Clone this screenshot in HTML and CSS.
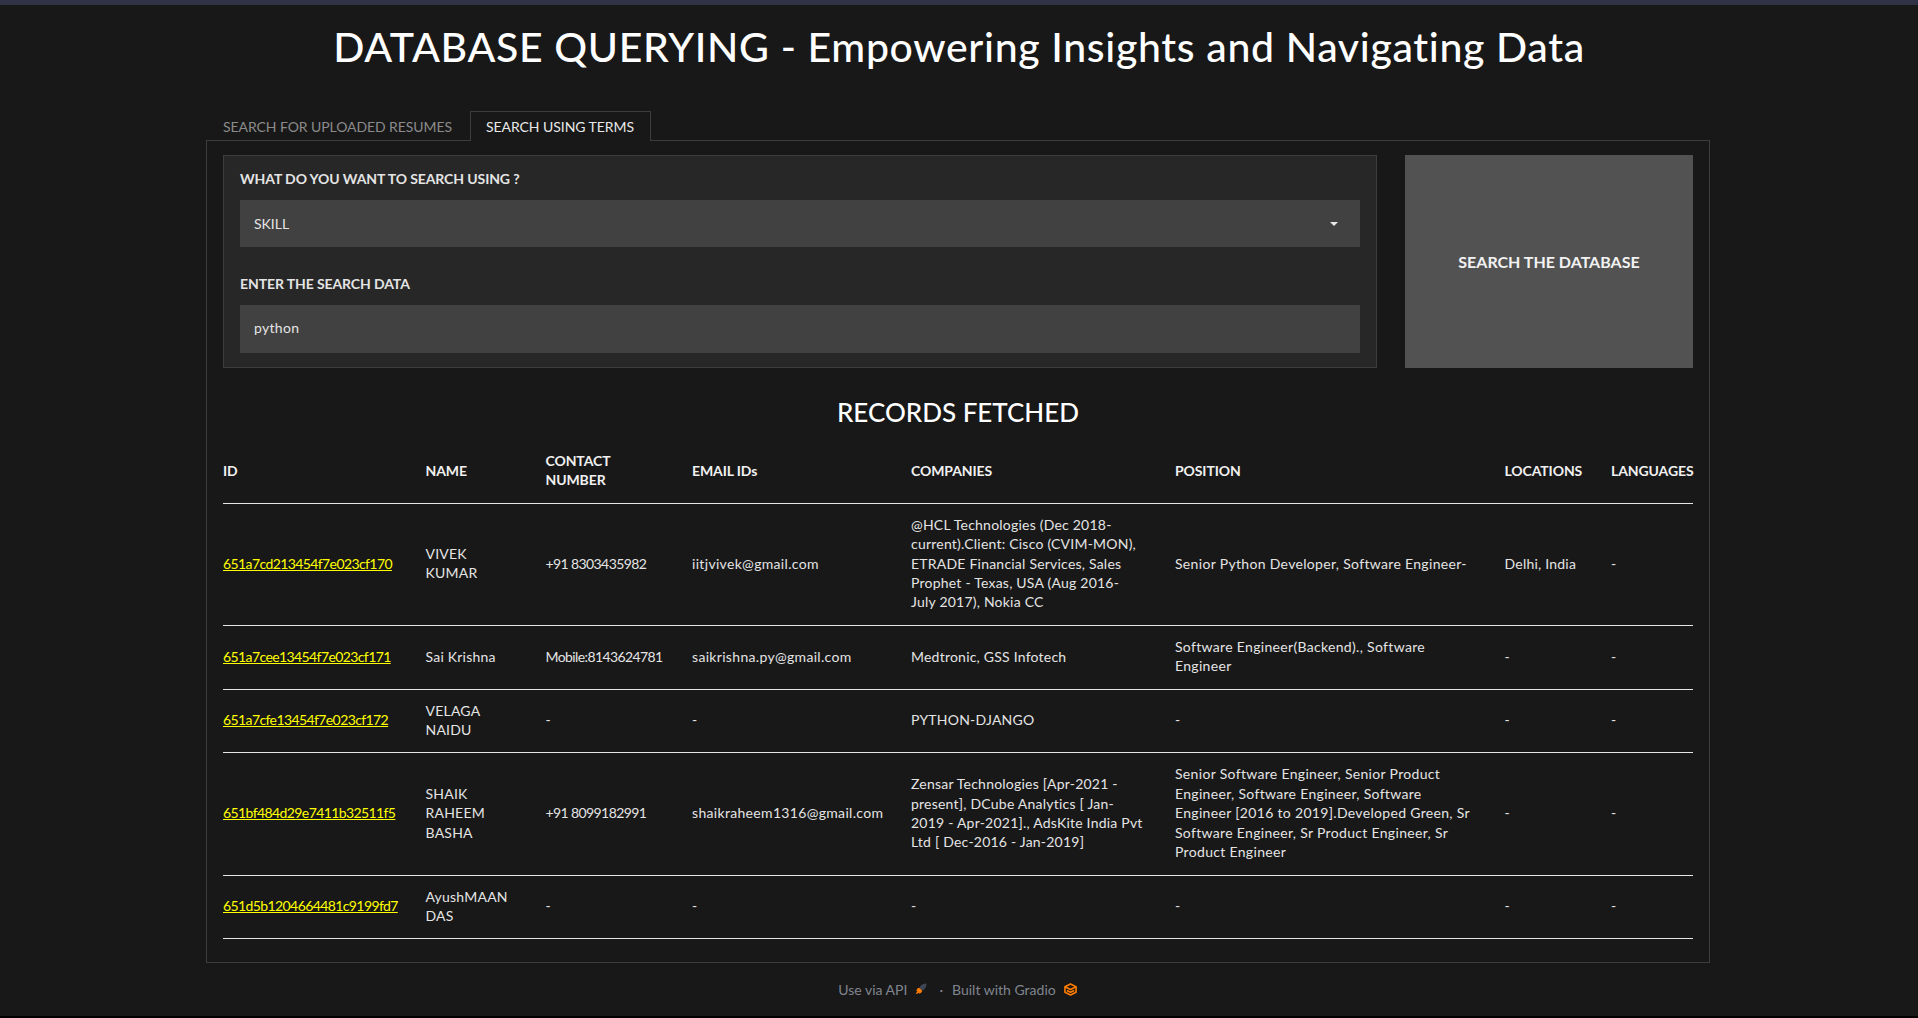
FILE: index.html
```html
<!DOCTYPE html>
<html lang="en">
<head>
  <meta charset="UTF-8">
  <title>Database Querying</title>
  <link rel="stylesheet" href="styles.css">
</head>
<body>

<div class="topbar"></div>

<h1>DATABASE QUERYING - Empowering Insights and Navigating Data</h1>

<div class="tabs">
  <div class="tab">SEARCH FOR UPLOADED RESUMES</div>
  <div class="tab active">SEARCH USING TERMS</div>
</div>

<div class="container">
  <div class="search-row">
    <div class="panel">
      <label class="field-label">WHAT DO YOU WANT TO SEARCH USING ?</label>
      <div class="input select">
        <span>SKILL</span>
        <span class="caret"></span>
      </div>
      <label class="field-label second">ENTER THE SEARCH DATA</label>
      <div class="input tall">python</div>
    </div>
    <div class="btn">SEARCH THE DATABASE</div>
  </div>

  <h2>RECORDS FETCHED</h2>

  <table class="records">
    <thead>
      <tr>
        <th>ID</th>
        <th>NAME</th>
        <th>CONTACT<br>NUMBER</th>
        <th>EMAIL IDs</th>
        <th>COMPANIES</th>
        <th>POSITION</th>
        <th>LOCATIONS</th>
        <th>LANGUAGES</th>
      </tr>
    </thead>
    <tbody>
      <tr>
        <td><a href="#">651a7cd213454f7e023cf170</a></td>
        <td>VIVEK<br>KUMAR</td>
        <td class="phone">+91 8303435982</td>
        <td class="email">iitjvivek@gmail.com</td>
        <td>@HCL Technologies (Dec 2018-<br>current).Client: Cisco (CVIM-MON),<br>ETRADE Financial Services, Sales<br>Prophet - Texas, USA (Aug 2016-<br>July 2017), Nokia CC</td>
        <td class="position">Senior Python Developer, Software Engineer-</td>
        <td>Delhi, India</td>
        <td>-</td>
      </tr>
      <tr>
        <td><a href="#">651a7cee13454f7e023cf171</a></td>
        <td>Sai Krishna</td>
        <td class="phone">Mobile:8143624781</td>
        <td class="email">saikrishna.py@gmail.com</td>
        <td>Medtronic, GSS Infotech</td>
        <td class="position">Software Engineer(Backend)., Software<br>Engineer</td>
        <td>-</td>
        <td>-</td>
      </tr>
      <tr>
        <td><a href="#">651a7cfe13454f7e023cf172</a></td>
        <td>VELAGA<br>NAIDU</td>
        <td>-</td>
        <td>-</td>
        <td>PYTHON-DJANGO</td>
        <td>-</td>
        <td>-</td>
        <td>-</td>
      </tr>
      <tr>
        <td><a href="#">651bf484d29e7411b32511f5</a></td>
        <td>SHAIK<br>RAHEEM<br>BASHA</td>
        <td class="phone">+91 8099182991</td>
        <td class="email">shaikraheem1316@gmail.com</td>
        <td>Zensar Technologies [Apr-2021 -<br>present], DCube Analytics [ Jan-<br>2019 - Apr-2021]., AdsKite India Pvt<br>Ltd [ Dec-2016 - Jan-2019]</td>
        <td class="position">Senior Software Engineer, Senior Product<br>Engineer, Software Engineer, Software<br>Engineer [2016 to 2019].Developed Green, Sr<br>Software Engineer, Sr Product Engineer, Sr<br>Product Engineer</td>
        <td>-</td>
        <td>-</td>
      </tr>
      <tr>
        <td><a href="#">651d5b1204664481c9199fd7</a></td>
        <td>AyushMAAN<br>DAS</td>
        <td>-</td>
        <td>-</td>
        <td>-</td>
        <td>-</td>
        <td>-</td>
        <td>-</td>
      </tr>
    </tbody>
  </table>
</div>

<div class="footer">
  <span>Use via API</span>
  <svg class="rocket" viewBox="0 0 12 12" width="12" height="12">
    <path d="M11.5 .5 C8.5 .5 6.5 1.6 5 3.4 L4.6 5.2 L6.8 7.4 L8.6 7 C10.4 5.5 11.5 3.5 11.5 .5 Z" fill="#3f4654"/>
    <path d="M4.2 4.8 C2.6 5 1.8 6.4 1.2 8 L2.6 7.8 C1.6 9.2 1.2 10.2 1 11 C1.8 10.8 2.8 10.4 4.2 9.4 L4 10.8 C5.6 10.2 7 9.4 7.2 7.8 Z" fill="#ff7c00"/>
  </svg>
  <span class="dot">·</span>
  <span>Built with Gradio</span>
  <svg class="logo" viewBox="0 0 14 14" width="13" height="13">
    <path d="M7 1 L13 4 V10 L7 13 L1 10 V4 Z M1 4 L7 7 L13 4 M3 8 L7 10 L11 8" fill="none" stroke="#ff7c00" stroke-width="1.7" stroke-linejoin="round"/>
  </svg>
</div>

</body>
</html>
```

FILE: styles.css
```css
* {
  box-sizing: border-box;
  margin: 0;
  padding: 0;
}
body {
  font-family: Lato, "Noto Sans", sans-serif;
  font-size: 14px;
  background: #181818;
  color: #e4e4e4;
  height: 1018px;
  overflow: hidden;
  border-bottom: 2px solid #000;
}
.topbar {
  height: 5px;
  background: #2f3345;
}
h1 {
  height: 106px;
  padding-top: 18px;
  font-size: 41px;
  line-height: 48px;
  font-weight: 500;
  color: #fff;
  text-align: center;
  letter-spacing: 0.65px;
}
.tabs {
  display: flex;
  margin: 0 206px;
  height: 30px;
  position: relative;
  z-index: 1;
}
.tab {
  padding: 0 17px 0 16px;
  line-height: 30px;
  color: #8b8b8b;
  border: 1px solid transparent;
  border-bottom: none;
  letter-spacing: -0.08px;
}
.tab.active {
  color: #e8e8e8;
  background: #181818;
  border-color: #3d3d3d;
  padding: 0 16px 0 15px;
  letter-spacing: -0.05px;
}
.container {
  width: 1504px;
  height: 823px;
  margin: -1px 0 0 206px;
  padding: 14px 16px 0;
  border: 1px solid #3d3d3d;
}
.search-row {
  display: grid;
  grid-template-columns: 1fr 288px;
  gap: 28px;
  height: 213px;
}
.panel {
  background: #272727;
  border: 1px solid #3d3d3d;
  padding: 16px 16px 14px;
}
.field-label {
  display: block;
  height: 14px;
  line-height: 14px;
  font-weight: 700;
  color: #e4e4e4;
  margin-bottom: 14px;
  letter-spacing: -0.1px;
}
.field-label.second {
  margin-top: 30px;
}
.input {
  height: 47px;
  padding: 0 14px;
  background: #414141;
  color: #e4e4e4;
  line-height: 45px;
}
.input.tall {
  height: 48px;
  line-height: 46px;
  letter-spacing: 0.3px;
}
.select {
  display: flex;
  justify-content: space-between;
  align-items: center;
}
.caret {
  width: 0;
  height: 0;
  margin-right: 8px;
  border-left: 4px solid transparent;
  border-right: 4px solid transparent;
  border-top: 4px solid #e8e8e8;
}
.btn {
  display: flex;
  align-items: center;
  justify-content: center;
  padding-bottom: 1px;
  background: #525252;
  color: #f2f2f2;
  font-size: 16px;
  font-weight: 700;
}
h2 {
  margin: 27px 0 11px;
  font-size: 26px;
  line-height: 34px;
  font-weight: 500;
  color: #fff;
  text-align: center;
}
.records {
  width: 100%;
  table-layout: fixed;
  border-collapse: collapse;
  line-height: 19.4px;
}
.records th,
.records td {
  padding: 11px 0 13px;
  text-align: left;
  vertical-align: middle;
  white-space: nowrap;
  border-bottom: 1px solid #e6e6e6;
}
.records td {
  letter-spacing: 0.22px;
}
.records th {
  font-weight: 700;
  color: #f0f0f0;
  letter-spacing: -0.1px;
}
.records th:nth-child(1) { width: 202.5px; }
.records th:nth-child(2) { width: 120px; }
.records th:nth-child(3) { width: 146.5px; }
.records th:nth-child(4) { width: 219px; }
.records th:nth-child(5) { width: 264px; }
.records th:nth-child(6) { width: 329.5px; }
.records th:nth-child(7) { width: 106.5px; }
.records a {
  color: #ffff00;
  letter-spacing: -0.6px;
}
.records td.phone {
  letter-spacing: -0.6px;
}
.records td.email,
.records td.position {
  letter-spacing: 0.32px;
}
.footer {
  display: flex;
  justify-content: center;
  align-items: center;
  gap: 8px;
  height: 52px;
  padding-right: 3px;
  color: #80858f;
}
.dot {
  margin: 0 1px 0 4px;
}
```
